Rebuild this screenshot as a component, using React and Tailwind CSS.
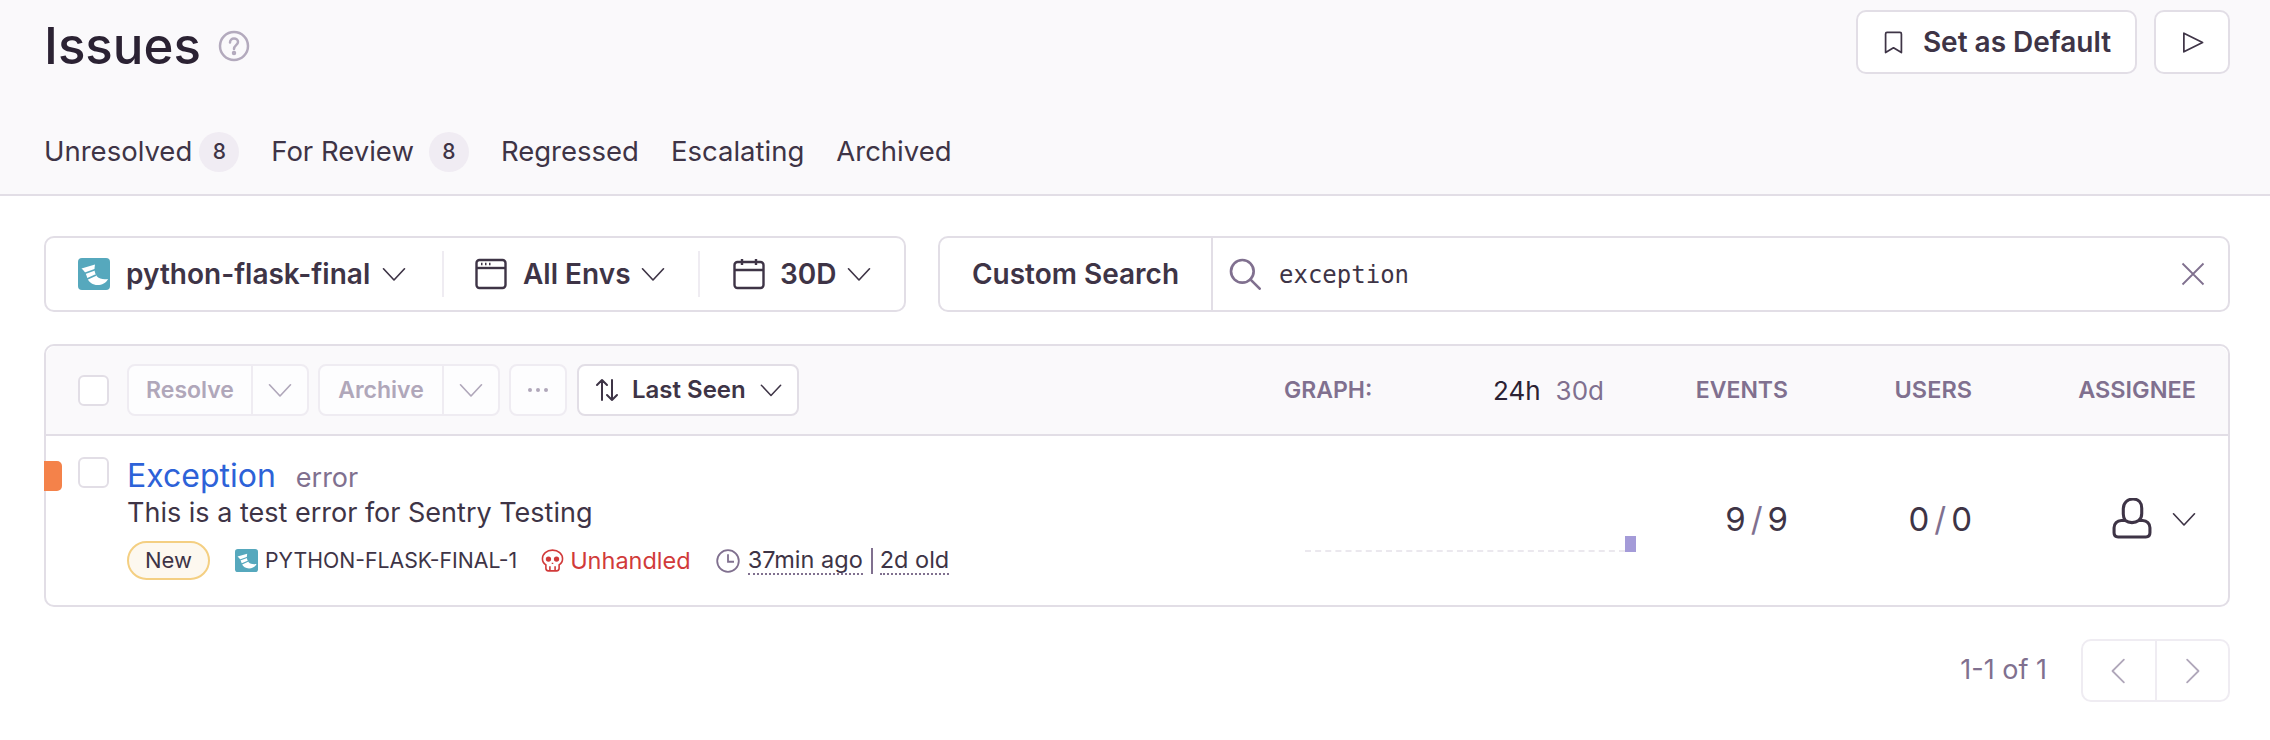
const Chev = ({ c = "w-[24px] h-[24px]", color = "#3e3446", dir = "down" }) => (
  <svg viewBox="0 0 16 16" className={c} fill="none" stroke={color} strokeWidth="1.1" strokeLinecap="round" strokeLinejoin="round">
    {dir === "down" && <path d="M1 4.5 8 12l7-7.5" />}
    {dir === "left" && <path d="M11 1 4 8l7 7" />}
    {dir === "right" && <path d="M5 1l7 7-7 7" />}
  </svg>
);

const Flask = ({ c }) => (
  <svg viewBox="0 0 32 32" className={c}>
    <rect width="32" height="32" rx="4" fill="#56a8bd" />
    <path d="M3.500 10.500 17 6.500c-1 5-.5 9 2 12 2.500 2.500 6 3 11 2.500-2 4-6 6-10.500 6-4.500 0-8.500-2.500-10-6.500-1-3-2-7-6-10z" fill="#fff" />
    <path d="M5 16 17.500 11.500M8 21.500 18 17" stroke="#56a8bd" strokeWidth="1.800" fill="none" />
  </svg>
);

const Skull = ({ c }) => (
  <svg viewBox="0 0 16 16" className={c} fill="none" stroke="#d13a3a" strokeWidth="1.100">
    <path d="M8 .8C4 .8 1 3.300 1 6.800c0 1.900.9 3.300 2.400 4.200v2.400c0 1 .8 1.800 1.800 1.800h5.600c1 0 1.800-.8 1.800-1.800V11C14.100 10.100 15 8.700 15 6.800 15 3.300 12 .8 8 .8z" />
    <circle cx="5.200" cy="7" r="1.300" fill="#d13a3a" />
    <circle cx="10.800" cy="7" r="1.300" fill="#d13a3a" />
    <path d="M6.200 12v3M9.800 12v3M8 9.600v.8" />
  </svg>
);

const Dots = () => (
  <>
    <i className="w-[4px] h-[4px] rounded-full bg-[#b0a7ba]" />
    <i className="w-[4px] h-[4px] rounded-full bg-[#b0a7ba]" />
    <i className="w-[4px] h-[4px] rounded-full bg-[#b0a7ba]" />
  </>
);

export default function App() {
  return (
    <div className="w-[2270px] h-[740px] overflow-hidden bg-white text-[#3e3446] font-['Inter','Liberation_Sans',sans-serif]">
      <header className="h-[196px] bg-[#faf9fb] border-b-2 border-[#e2dee6] pl-[44px] pr-[40px]">
        <div className="flex justify-between items-start">
          <div className="flex items-center gap-[17px] pt-[22px]">
            <h1 className="text-[51px] leading-[48px] font-medium text-[#2b2233]">Issues</h1>
            <svg viewBox="0 0 32 32" className="w-[32px] h-[32px]" fill="none" stroke="#b3aabd" strokeWidth="2.500">
              <circle cx="16" cy="16" r="14" />
              <path d="M12 12.500c0-2.500 1.800-4 4-4s4 1.500 4 3.500c0 3-4 3.500-4 7" strokeLinecap="round" />
              <circle cx="16" cy="23" r="1" fill="#b3aabd" />
            </svg>
          </div>
          <div className="flex gap-[17px] pt-[10px]">
            <button className="h-[64px] w-[281px] flex items-center justify-center gap-[18px] bg-white border-2 border-[#e2dee6] rounded-[10px] font-semibold text-[28px]">
              <svg viewBox="0 0 16 16" className="w-[23px] h-[23px]" fill="none" stroke="#3e3446" strokeWidth="1.200" strokeLinejoin="round"><path d="M2.500 2c0-.6.4-1 1-1h9c.6 0 1 .4 1 1v13L8 11.700 2.500 15z" /></svg>
              Set as Default
            </button>
            <button className="h-[64px] w-[76px] flex items-center justify-center bg-white border-2 border-[#e2dee6] rounded-[10px]">
              <svg viewBox="0 0 16 16" className="w-[23px] h-[23px]" fill="none" stroke="#3e3446" strokeWidth="1.200" strokeLinejoin="round"><path d="M2 1.500 15 8 2 14.500z" /></svg>
            </button>
          </div>
        </div>
        <nav className="flex items-center mt-[56px] text-[27.5px] text-[#3e3446] h-[44px]">
          <span>Unresolved</span>
          <span className="ml-[7px] w-[40px] h-[40px] rounded-full bg-[#f0ecf3] flex items-center justify-center text-[21px] font-medium">8</span>
          <span className="ml-[32px]">For Review</span>
          <span className="ml-[15px] w-[40px] h-[40px] rounded-full bg-[#f0ecf3] flex items-center justify-center text-[21px] font-medium">8</span>
          <span className="ml-[32px]">Regressed</span>
          <span className="ml-[32px]">Escalating</span>
          <span className="ml-[32px]">Archived</span>
        </nav>
      </header>

      <main className="pl-[44px] pr-[40px]">
        <div className="flex gap-[32px] mt-[40px] h-[76px]">
          <div className="w-[862px] flex items-center border-2 border-[#e2dee6] rounded-[10px] font-semibold text-[28px]">
            <div className="w-[396px] flex items-center pl-[32px]">
              <Flask c="w-[32px] h-[32px] mr-[16px]" />
              <span>python-flask-final</span>
              <Chev c="w-[24px] h-[24px] ml-[12px]" />
            </div>
            <div className="w-[256px] h-[46px] border-l-2 border-[#efecf2] flex items-center pl-[31px]">
              <svg viewBox="0 0 32 32" className="w-[32px] h-[32px] mr-[16px]" fill="none" stroke="#3e3446" strokeWidth="2.400"><rect x="1.500" y="2" width="29" height="28" rx="3" /><path d="M1.500 10h29" /><path d="M6 6h1.500M10 6h1.500M14 6h1.500" /></svg>
              <span>All Envs</span>
              <Chev c="w-[24px] h-[24px] ml-[10px]" />
            </div>
            <div className="h-[46px] border-l-2 border-[#efecf2] flex items-center pl-[33px]">
              <svg viewBox="0 0 32 32" className="w-[32px] h-[32px] mr-[15px]" fill="none" stroke="#3e3446" strokeWidth="2.400"><rect x="1.500" y="4" width="29" height="26" rx="3" /><path d="M1.500 12h29M9 1v6M23 1v6" /></svg>
              <span>30D</span>
              <Chev c="w-[24px] h-[24px] ml-[10px]" />
            </div>
          </div>
          <div className="flex-1 flex items-center border-2 border-[#e2dee6] rounded-[10px]">
            <div className="w-[273px] h-full flex items-center justify-center border-r-2 border-[#e2dee6] font-semibold text-[28px]">Custom Search</div>
            <svg viewBox="0 0 24 24" className="ml-[16px] w-[32px] h-[32px]" fill="none" stroke="#80708f" strokeWidth="2" strokeLinecap="round"><circle cx="10" cy="10" r="8.500" /><path d="M16 16l7 7" /></svg>
            <span className="ml-[18px] pt-[2px] font-['DejaVu_Sans_Mono',monospace] text-[24px]">exception</span>
            <svg viewBox="0 0 16 16" className="ml-auto mr-[23px] w-[24px] h-[24px]" fill="none" stroke="#80708f" strokeWidth="1.200"><path d="M1 1l14 14M15 1 1 15" /></svg>
          </div>
        </div>

        <div className="mt-[32px] h-[263px] border-2 border-[#e2dee6] rounded-[10px]">
          <div className="h-[90px] flex items-center bg-[#faf9fb] border-b-2 border-[#e2dee6] rounded-t-[10px] pl-[32px]">
            <span className="w-[31px] h-[31px] rounded-[6px] border-2 border-[#e2dee6] bg-white" />
            <div className="ml-[18px] flex items-center w-[182px] h-[52px] border-2 border-[#efecf2] rounded-[8px] text-[#b0a7ba] font-semibold text-[23px] bg-[#fdfdfe]">
              <span className="w-[122px] text-center">Resolve</span>
              <span className="flex-1 h-full border-l-2 border-[#efecf2] flex items-center justify-center"><Chev color="#b0a7ba" /></span>
            </div>
            <div className="ml-[9px] flex items-center w-[182px] h-[52px] border-2 border-[#efecf2] rounded-[8px] text-[#b0a7ba] font-semibold text-[23px] bg-[#fdfdfe]">
              <span className="w-[122px] text-center">Archive</span>
              <span className="flex-1 h-full border-l-2 border-[#efecf2] flex items-center justify-center"><Chev color="#b0a7ba" /></span>
            </div>
            <div className="ml-[9px] flex items-center justify-center gap-[4px] w-[58px] h-[52px] border-2 border-[#efecf2] rounded-[8px] bg-[#fdfdfe]">
              <Dots />
            </div>
            <div className="ml-[10px] flex items-center w-[222px] h-[52px] pl-[16px] border-2 border-[#e2dee6] rounded-[8px] bg-white font-semibold text-[24px]">
              <svg viewBox="0 0 24 24" className="w-[24px] h-[24px] mr-[13px]" fill="none" stroke="#3e3446" strokeWidth="2" strokeLinecap="round" strokeLinejoin="round"><path d="M7 22V2M2 7l5-5 5 5M17 2v20M12 17l5 5 5-5" /></svg>
              <span>Last Seen</span>
              <Chev c="w-[22px] h-[22px] ml-[14px]" />
            </div>
            <div className="ml-auto w-[320px] flex items-center">
              <span className="text-[#80708f] font-semibold text-[23px]">GRAPH:</span>
              <span className="ml-auto text-[26px] text-[#2b2233]">24h</span>
              <span className="ml-[15px] text-[26px] text-[#80708f]">30d</span>
            </div>
            <span className="w-[184px] text-right text-[#80708f] font-semibold text-[23px]">EVENTS</span>
            <span className="w-[184px] text-right text-[#80708f] font-semibold text-[23.5px]">USERS</span>
            <span className="w-[256px] pr-[32px] text-right text-[#80708f] font-semibold text-[23.5px]">ASSIGNEE</span>
          </div>
          <div className="h-[169px] flex relative pl-[32px]">
            <span className="absolute left-[-2px] top-[25px] w-[18px] h-[30px] bg-[#f4824a] rounded-r-[5px]" />
            <span className="mt-[21px] w-[31px] h-[31px] rounded-[6px] border-2 border-[#e2dee6] bg-white shrink-0" />
            <div className="ml-[18px] pt-[23px] flex-1">
              <div className="flex items-baseline gap-[20px] leading-[34px]">
                <span className="text-[32px] text-[#2d62d8]">Exception</span>
                <span className="text-[27px] text-[#80708f]">error</span>
              </div>
              <div className="text-[27px] leading-[36px]">This is a test error for Sentry Testing</div>
              <div className="flex items-center mt-[10px] text-[23.5px]">
                <span className="w-[83px] h-[39px] rounded-full border-2 border-[#f4cf82] bg-[#fdf8ef] flex items-center justify-center text-[22px]">New</span>
                <Flask c="ml-[25px] w-[23px] h-[23px]" />
                <span className="ml-[7px] text-[21.25px]">PYTHON-FLASK-FINAL-1</span>
                <Skull c="ml-[24px] w-[23px] h-[23px]" />
                <span className="ml-[6px] text-[#d13a3a]">Unhandled</span>
                <svg viewBox="0 0 16 16" className="ml-[25px] w-[24px] h-[24px]" fill="none" stroke="#80708f" strokeWidth="1.200"><circle cx="8" cy="8" r="7.200" /><path d="M8 3.500V8.500h4" /></svg>
                <span className="ml-[8px] border-b-2 border-dotted border-[#80708f] leading-[26px]">37min ago</span>
                <span className="ml-[8px] mr-[7px] w-[2px] h-[26px] bg-[#80708f]" />
                <span className="border-b-2 border-dotted border-[#80708f] leading-[26px]">2d old</span>
              </div>
            </div>
            <div className="w-[331px] h-[16px] mt-[100px] flex items-end">
              <div className="flex-1 border-t-2 border-dashed border-[#ebe8ee]" />
              <div className="w-[11px] h-[16px] bg-[#a49bd8]" />
            </div>
            <div className="w-[152px] flex items-center justify-end text-[33px] pb-[2px]"><span>9</span><span className="text-[#80708f] mx-[5px]">/</span><span>9</span></div>
            <div className="w-[184px] flex items-center justify-end text-[33px] pb-[2px]"><span>0</span><span className="text-[#80708f] mx-[5px]">/</span><span>0</span></div>
            <div className="w-[256px] flex items-center justify-end pr-[32px] pb-[4px]">
              <svg viewBox="0 0 39 40" className="w-[40px] h-[41px]" fill="none" stroke="#3e3446" strokeWidth="3" strokeLinejoin="round"><path d="M13 22H9c-4 0-7 3-7 7v5c0 2.500 1.500 4 4 4h27c2.500 0 4-1.500 4-4v-5c0-4-3-7-7-7h-4c2-1.500 3-4 3-7v-5c0-5.500-3-9-8.500-9S11 5 11 10.500v5c0 3 1 5 2 6.500 2 1.500 4 2 6.500 2s4.500-.5 6.500-2" /></svg>
              <Chev c="w-[24px] h-[24px] ml-[20px]" />
            </div>
          </div>
        </div>

        <div className="flex justify-end items-center mt-[32px]">
          <span className="text-[27px] text-[#80708f] mr-[34px]">1-1 of 1</span>
          <div className="flex w-[149px] h-[63px] border-2 border-[#efecf2] rounded-[10px]">
            <span className="flex-1 flex items-center justify-center border-r-2 border-[#efecf2]"><Chev dir="left" color="#b0a7ba" c="w-[26px] h-[26px]" /></span>
            <span className="flex-1 flex items-center justify-center"><Chev dir="right" color="#b0a7ba" c="w-[26px] h-[26px]" /></span>
          </div>
        </div>
      </main>
    </div>
  );
}
